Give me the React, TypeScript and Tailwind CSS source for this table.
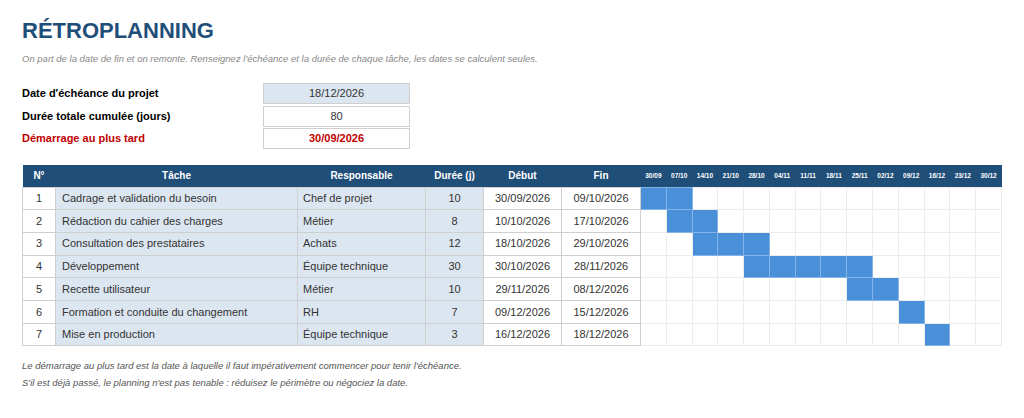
const tasks = [
  { n: 1, name: "Cadrage et validation du besoin", who: "Chef de projet", d: 10, start: "30/09/2026", end: "09/10/2026", from: 0, to: 1 },
  { n: 2, name: "Rédaction du cahier des charges", who: "Métier", d: 8, start: "10/10/2026", end: "17/10/2026", from: 1, to: 2 },
  { n: 3, name: "Consultation des prestataires", who: "Achats", d: 12, start: "18/10/2026", end: "29/10/2026", from: 2, to: 4 },
  { n: 4, name: "Développement", who: "Équipe technique", d: 30, start: "30/10/2026", end: "28/11/2026", from: 4, to: 8 },
  { n: 5, name: "Recette utilisateur", who: "Métier", d: 10, start: "29/11/2026", end: "08/12/2026", from: 8, to: 9 },
  { n: 6, name: "Formation et conduite du changement", who: "RH", d: 7, start: "09/12/2026", end: "15/12/2026", from: 10, to: 10 },
  { n: 7, name: "Mise en production", who: "Équipe technique", d: 3, start: "16/12/2026", end: "18/12/2026", from: 11, to: 11 },
]

const weeks = ["30/09", "07/10", "14/10", "21/10", "28/10", "04/11", "11/11", "18/11", "25/11", "02/12", "09/12", "16/12", "23/12", "30/12"]

export default function App() {
  return (
    <div className="min-h-screen bg-white px-[22px] pt-[18px] font-['Liberation_Sans',Arial,sans-serif] text-[#333]">
      <h1 className="text-[22px] leading-[26px] font-bold text-[#1f4e79]">RÉTROPLANNING</h1>
      <p className="mt-[8px] text-[9.5px] leading-[14px] italic text-[#888]">
        On part de la date de fin et on remonte. Renseignez l'échéance et la durée de chaque tâche, les dates se calculent seules.
      </p>

      <div className="mt-[17px] flex flex-col gap-[1.5px] text-[11px]">
        <div className="flex items-center">
          <div className="w-[241px] font-bold text-black">Date d'échéance du projet</div>
          <div className="flex h-[21px] w-[147px] items-center justify-center border border-[#cfcfcf] bg-[#dce6f1]">18/12/2026</div>
        </div>
        <div className="flex items-center">
          <div className="w-[241px] font-bold text-black">Durée totale cumulée (jours)</div>
          <div className="flex h-[21px] w-[147px] items-center justify-center border border-[#cfcfcf] bg-white">80</div>
        </div>
        <div className="flex items-center">
          <div className="w-[241px] font-bold text-[#c00000]">Démarrage au plus tard</div>
          <div className="flex h-[21px] w-[147px] items-center justify-center border border-[#cfcfcf] bg-white font-bold text-[#c00000]">30/09/2026</div>
        </div>
      </div>

      <table className="mt-[16px] w-[980px] table-fixed border-collapse text-[11px]">
        <colgroup>
          <col className="w-[33px]" />
          <col className="w-[242px]" />
          <col className="w-[128px]" />
          <col className="w-[58px]" />
          <col className="w-[78px]" />
          <col className="w-[79px]" />
          {weeks.map((w) => (
            <col key={w} />
          ))}
        </colgroup>
        <thead>
          <tr className="h-[22px] bg-[#1f4e79] text-white">
            <th className="text-[10px] font-bold">N°</th>
            <th className="text-[10px] font-bold">Tâche</th>
            <th className="text-[10px] font-bold">Responsable</th>
            <th className="text-[10px] font-bold">Durée (j)</th>
            <th className="text-[10px] font-bold">Début</th>
            <th className="text-[10px] font-bold">Fin</th>
            {weeks.map((w) => (
              <th key={w} className="text-[6.5px] font-bold">{w}</th>
            ))}
          </tr>
        </thead>
        <tbody>
          {tasks.map((t) => (
            <tr key={t.n} className="h-[22.7px]">
              <td className="border border-[#cfcfcf] bg-white text-center">{t.n}</td>
              <td className="border border-[#cfcfcf] bg-[#dce6f1] pl-[6px]">{t.name}</td>
              <td className="border border-[#cfcfcf] bg-[#dce6f1] pl-[5px]">{t.who}</td>
              <td className="border border-[#cfcfcf] bg-[#dce6f1] text-center">{t.d}</td>
              <td className="border border-[#cfcfcf] bg-white text-center">{t.start}</td>
              <td className="border border-[#cfcfcf] bg-white text-center">{t.end}</td>
              {weeks.map((w, i) =>
                i >= t.from && i <= t.to ? (
                  <td key={w} className="border border-[#86b3e6] bg-[#4a90d9]" />
                ) : (
                  <td key={w} className="border border-[#ececec] bg-white" />
                )
              )}
            </tr>
          ))}
        </tbody>
      </table>

      <div className="mt-[11px] text-[9.5px] leading-[17px] italic text-[#555]">
        <p>Le démarrage au plus tard est la date à laquelle il faut impérativement commencer pour tenir l'échéance.</p>
        <p>S'il est déjà passé, le planning n'est pas tenable : réduisez le périmètre ou négociez la date.</p>
      </div>
    </div>
  )
}
